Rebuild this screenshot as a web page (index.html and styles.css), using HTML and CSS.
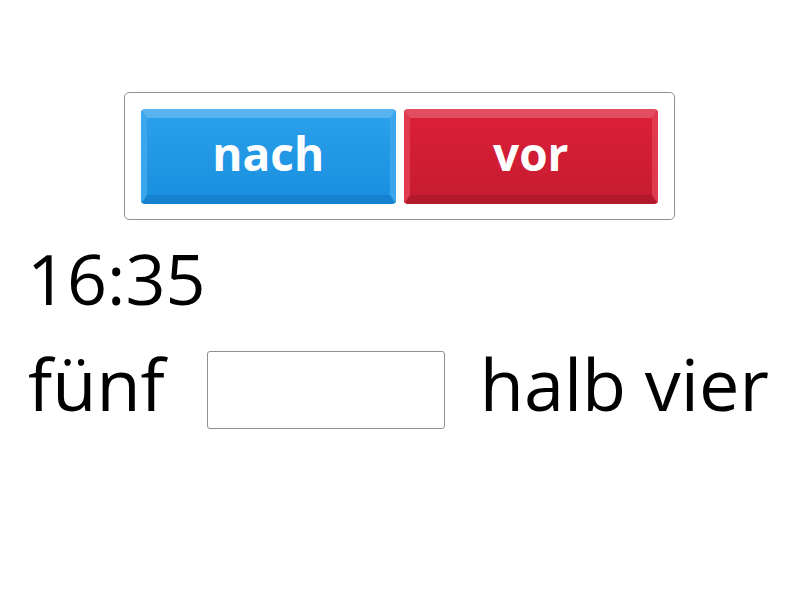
FILE: index.html
```html
<!DOCTYPE html>
<html lang="de">
<head>
<meta charset="utf-8">
<link rel="stylesheet" href="styles.css">
</head>
<body>
<div class="page">
  <div class="choices">
    <button class="choice choice-blue">nach</button>
    <button class="choice choice-red">vor</button>
  </div>
  <div class="time">16:35</div>
  <div class="sentence">
    <span class="word">fünf</span>
    <span class="blank"></span>
    <span class="word">halb vier</span>
  </div>
</div>
</body>
</html>
```
FILE: styles.css
```css
html, body {
  margin: 0;
  padding: 0;
  background: #fff;
}
body {
  font-family: "Open Sans", "Noto Sans", sans-serif;
  color: #000;
  width: 800px;
  height: 600px;
  overflow: hidden;
}
.page {
  display: flex;
  flex-direction: column;
  padding-top: 92px;
}
.choices {
  align-self: center;
  box-sizing: border-box;
  width: 551px;
  height: 128px;
  border: 1px solid #8f8f8f;
  border-radius: 5px;
  padding: 16px;
  display: flex;
  gap: 8px;
  margin-left: -1px;
}
.choice {
  flex: 1;
  height: 95px;
  box-sizing: border-box;
  border-radius: 4px;
  border-style: solid;
  border-width: 9px 6px 9px 6px;
  font-family: "Open Sans", sans-serif;
  font-weight: 700;
  font-size: 46px;
  color: #fff;
  padding: 0 0 8px 0;
  line-height: 1;
  display: flex;
  align-items: center;
  justify-content: center;
}
.choice-blue {
  background: linear-gradient(#2a9fea, #1a90e0);
  border-top-color: #58b3ef;
  border-left-color: #3ba6ec;
  border-right-color: #3ba6ec;
  border-bottom-color: #1682cf;
}
.choice-red {
  background: linear-gradient(#da1f37, #c81c31);
  border-top-color: #e24d5f;
  border-left-color: #e03a4f;
  border-right-color: #e03a4f;
  border-bottom-color: #b21a2c;
}
.time {
  font-size: 70px;
  line-height: 98px;
  padding-left: 27px;
  margin-top: 9px;
}
.sentence {
  display: flex;
  align-items: center;
  padding-left: 28px;
  font-size: 72px;
  line-height: 98px;
  margin-top: 7px;
}
.blank {
  box-sizing: border-box;
  width: 238px;
  height: 78px;
  border: 1px solid #8f8f8f;
  border-radius: 3px;
  margin: 14px 35px 0 42px;
}
```
